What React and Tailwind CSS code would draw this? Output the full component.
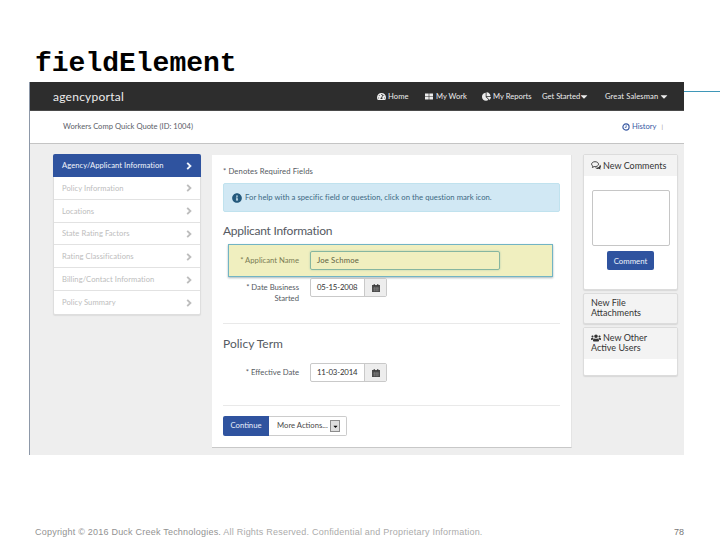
import React from "react";
import {
  FaTachometerAlt,
  FaThLarge,
  FaChartPie,
  FaCaretDown,
  FaInfoCircle,
  FaUsers,
} from "react-icons/fa";

const sections = [
  "Policy Information",
  "Locations",
  "State Rating Factors",
  "Rating Classifications",
  "Billing/Contact Information",
  "Policy Summary",
];

function Chevron() {
  return (
    <svg viewBox="0 0 6 8" className="h-[8px] w-[6px]" fill="none" stroke="currentColor" strokeWidth="1.9">
      <path d="M1.2 0.9 L4.4 4 L1.2 7.1" />
    </svg>
  );
}

function CalendarIcon() {
  return (
    <svg viewBox="0 0 8 8" className="h-[8px] w-[8px]">
      <path d="M0 1h8v7H0z" fill="#4a4a4a" />
      <path d="M1.7 0h1v2h-1z M5.3 0h1v2h-1z" fill="#333" />
      <path d="M0.8 4.2h6.4 M0.8 6h6.4 M2.6 3v4.4 M4.2 3v4.4 M5.8 3v4.4" stroke="#9a9a9a" strokeWidth="0.4" />
    </svg>
  );
}

function ClockIcon() {
  return (
    <svg viewBox="0 0 8 8" className="mr-[2px] size-[8px]" fill="none" stroke="currentColor">
      <circle cx="4" cy="4" r="3.1" strokeWidth="1.2" />
      <path d="M4.2 2.2v2.2H2.8" strokeWidth="0.8" />
    </svg>
  );
}

function CommentsIcon() {
  return (
    <svg viewBox="0 0 10 9" className="h-[9px] w-[10px]">
      <path d="M4 6.6c3 .6 5-.9 4.900-3.100 1.400 1.100 1.300 2.700.2 3.600l.6 1.500-2-.8C6.200 8.200 4.800 7.700 4 6.600z" fill="#333" />
      <path d="M4 .7C2 .7.600 1.800.600 3.200c0 .9.500 1.600 1.300 2l-.5 1.300 1.700-.9C5.700 5.900 7.500 4.800 7.500 3.200 7.500 1.700 6 .7 4 .7z" fill="#f3f3f3" stroke="#333" strokeWidth="0.9" />
    </svg>
  );
}

function TopBar() {
  return (
    <header className="flex h-[29px] items-center border-b border-[#4a4a4a] bg-[#2d2d2d] pt-px pl-[23px] text-[7.6px] text-[#ececec]">
      <div className="w-[324px] text-[12px] leading-none tracking-[0.25px]">agencyportal</div>
      <div className="flex w-[48px] items-center gap-[2px] tracking-[0.1px]">
        <FaTachometerAlt className="size-[9px]" />
        Home
      </div>
      <div className="flex w-[57px] items-center gap-[3px]">
        <svg viewBox="0 0 8 7" className="h-[7px] w-[8px]" fill="currentColor">
          <path d="M0 .5h3.700v2.700H0z M4.300.5H8v2.700H4.300z M0 3.800h3.700v2.700H0z M4.300 3.800H8v2.700H4.300z" />
        </svg>
        My Work
      </div>
      <div className="flex w-[60px] items-center gap-[2px]">
        <FaChartPie className="size-[9px]" />
        My Reports
      </div>
      <div className="flex w-[63px] items-center">
        Get Started
        <FaCaretDown className="h-[11px] w-[8px]" />
      </div>
      <div className="flex items-center gap-[2px] tracking-[0.12px]">
        Great Salesman
        <FaCaretDown className="h-[11px] w-[8px]" />
      </div>
    </header>
  );
}

function SideNav() {
  return (
    <nav className="mt-[10px] h-[161px] w-[148px] rounded-[2px] border border-[#dedede] bg-white text-[7.6px] tracking-[0.06px] text-[#bdbdbd] shadow-[0_1px_1px_#dddddd]">
      <div className="-mx-px -mt-px flex h-[23px] items-center justify-between rounded-t-[2px] bg-[#2f539f] pr-[9px] pl-[9px] text-[#f2f5fb]">
        <span>Agency/Applicant Information</span>
        <Chevron />
      </div>
      {sections.map((label) => (
        <div
          key={label}
          className="flex h-[22.8px] items-center justify-between border-b border-[#e2e2e2] pt-px pr-[8px] pl-[8px] last:border-b-0"
        >
          <span>{label}</span>
          <Chevron />
        </div>
      ))}
    </nav>
  );
}

function DateInput({ value }) {
  return (
    <div className="flex h-[19px] w-[77px] overflow-hidden rounded-[2px] border border-[#c9c9c9] bg-white text-[7.8px] text-[#333]">
      <div className="flex w-[53px] items-center pl-[6px] tracking-[-0.15px]">{value}</div>
      <div className="flex flex-1 items-center justify-center border-l border-[#c9c9c9] bg-[#ededed]">
        <CalendarIcon />
      </div>
    </div>
  );
}

function MainPanel() {
  return (
    <main className="mt-[11px] ml-[11px] h-[293px] w-[360px] border-r border-b border-r-[#e4e4e4] border-b-[#c8c8c8] bg-white pl-[11px] text-[7.7px] text-[#555a62]">
      <div className="flex h-[28px] items-center pt-[5px] tracking-[0.1px]">* Denotes Required Fields</div>
      <div className="flex h-[29px] w-[337px] items-center gap-[3px] rounded-[2px] border border-[#c0e2ee] bg-[#d1e8f4] pl-[8px] tracking-[0.03px] text-[#3d6883]">
        <FaInfoCircle className="size-[10px] text-[#24597c]" />
        <span>For help with a specific field or question, click on the question mark icon.</span>
      </div>
      <h2 className="flex h-[32px] items-center pt-[6px] text-[12px] leading-none tracking-[-0.25px]">
        Applicant Information
      </h2>
      <div className="ml-[5px] flex h-[33px] w-[325px] items-center border border-[#72b4c4] bg-[#f0efbf] shadow-[0_1px_2px_#a9b7bb]">
        <div className="w-[70px] text-right text-[#7b7d55]">* Applicant Name</div>
        <div className="ml-[11px] flex h-[19px] w-[190px] items-center rounded-[2px] border border-[#86b6a0] pt-px pl-[6px] tracking-[0.15px] text-[#5f6242] shadow-[0_0_2px_#a7c9ae]">
          Joe Schmoe
        </div>
      </div>
      <div className="flex h-[46px] items-start pt-px">
        <div className="w-[76px] pt-[4px] text-right leading-[11px]">
          * Date Business
          <br />
          Started
        </div>
        <div className="ml-[11px]">
          <DateInput value="05-15-2008" />
        </div>
      </div>
      <div className="h-px w-[337px] bg-[#e9e9e9]" />
      <h2 className="flex h-[39px] items-center text-[12px] leading-none">Policy Term</h2>
      <div className="flex h-[42px] items-start">
        <div className="w-[76px] text-right leading-[19px]">* Effective Date</div>
        <div className="ml-[11px]">
          <DateInput value="11-03-2014" />
        </div>
      </div>
      <div className="h-px w-[337px] bg-[#e9e9e9]" />
      <div className="mt-[10px] flex h-[20px] w-[124px]">
        <div className="flex w-[46px] items-center justify-center rounded-l-[2px] bg-[#2f539f] text-[#e8eefb]">
          Continue
        </div>
        <div className="flex flex-1 items-center rounded-r-[2px] border border-l-0 border-[#cccccc] pl-[8px] text-[#4a4a4a]">
          <span className="w-[53px]">More Actions...</span>
          <span className="flex h-[12px] w-[10px] items-center justify-center border border-[#8c8c8c] bg-[#dddddd]">
            <FaCaretDown className="size-[7px] text-black" />
          </span>
        </div>
      </div>
    </main>
  );
}

function SidePanels() {
  return (
    <aside className="mt-[10px] ml-[11px] flex w-[95px] flex-col text-[9px] leading-[10px] text-[#333]">
      <section className="flex h-[136px] flex-col items-center rounded-[2px] border border-[#dcdcdc] bg-white shadow-[0_1px_1px_#d8d8d8]">
        <div className="flex h-[21px] w-full items-center gap-[2px] bg-[#f3f3f3] pl-[7px]">
          <CommentsIcon />
          New Comments
        </div>
        <div className="mt-[14px] h-[56px] w-[78px] rounded-[2px] border border-[#c6c6c6]" />
        <div className="mt-[5px] flex h-[19px] w-[47px] items-center justify-center rounded-[2px] bg-[#2f539f] text-[7.8px] text-[#eef2fb]">
          Comment
        </div>
      </section>
      <section className="mt-[3px] h-[31px] rounded-[2px] border border-[#dcdcdc] bg-[#f3f3f3] pt-[4px] pl-[7px] shadow-[0_1px_1px_#d8d8d8]">
        New File
        <br />
        Attachments
      </section>
      <section className="mt-[3px] h-[49px] rounded-[2px] border border-[#dcdcdc] bg-white shadow-[0_1px_1px_#d8d8d8]">
        <div className="h-[31px] bg-[#f3f3f3] pt-[5px] pl-[7px]">
          <div className="flex items-center gap-[2px]">
            <FaUsers className="size-[10px]" />
            New Other
          </div>
          Active Users
        </div>
      </section>
    </aside>
  );
}

export default function App() {
  return (
    <div className="flex h-[540px] w-[720px] flex-col overflow-hidden bg-white">
      <h1 className="h-[82px] pt-[48px] pl-[35px] font-['Liberation_Mono',monospace] text-[28px] leading-[32px] font-bold text-black">
        fieldElement
      </h1>
      <div className="flex h-[373px]">
        <div className="ml-[29px] w-[655px] border-l border-[#8d98a8] bg-[#eeeeee] font-[Lato,sans-serif] whitespace-nowrap">
          <TopBar />
          <div className="flex h-[33px] items-center justify-between border-b border-[#c4c4c4] bg-white pr-[21px] pl-[33px] text-[7.6px] text-[#5b6068]">
            <span>Workers Comp Quick Quote (ID: 1004)</span>
            <span className="flex items-center text-[#3a5aa3]">
              <ClockIcon />
              History
              <span className="ml-[5px] text-[6px] text-[#888]">|</span>
            </span>
          </div>
          <div className="flex items-start pl-[23px]">
            <SideNav />
            <MainPanel />
            <SidePanels />
          </div>
        </div>
        <div className="mt-[9px] h-px flex-1 bg-[#3f97b8]" />
      </div>
      <footer className="mt-[70px] flex justify-between pr-[36px] pl-[35px] font-['Liberation_Sans',sans-serif] text-[9px] leading-[14px] text-[#ababab]">
        <span className="tracking-[0.22px]">
          <span className="text-[#929292]">Copyright © 2016 Duck Creek Technologies.</span> All Rights
          Reserved. Confidential and Proprietary Information.
        </span>
        <span className="text-[#777]">78</span>
      </footer>
    </div>
  );
}
